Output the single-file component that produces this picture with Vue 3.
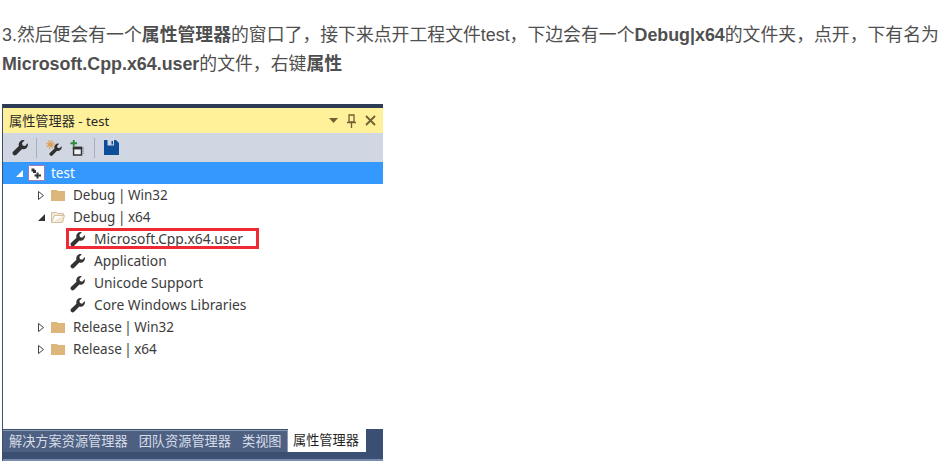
<script setup>
const rows = [
  { label: "Debug | Win32", kind: "folder", level: 1, arrow: "closed" },
  { label: "Debug | x64", kind: "open", level: 1, arrow: "open" },
  { label: "Microsoft.Cpp.x64.user", kind: "wrench", level: 2, marked: true },
  { label: "Application", kind: "wrench", level: 2 },
  { label: "Unicode Support", kind: "wrench", level: 2 },
  { label: "Core Windows Libraries", kind: "wrench", level: 2 },
  { label: "Release | Win32", kind: "folder", level: 1, arrow: "closed" },
  { label: "Release | x64", kind: "folder", level: 1, arrow: "closed" },
];
const wrench =
  "M15.7 3.3l-2.7 2.7-2.4-.6-.6-2.4 2.700-2.700a4.600 4.600 0 0 0-5.800 5.800L1 11.800a2.300 2.300 0 0 0 3.200 3.200L10 9.100a4.600 4.600 0 0 0 5.700-5.800z";
</script>

<template>
  <main class="page">
    <p class="intro">
      3.然后便会有一个<b>属性管理器</b>的窗口了，接下来点开工程文件test，下边会有一个<b>Debug|x64</b>的文件夹，点开，下有名为<br />
      <b>Microsoft.Cpp.x64.user</b>的文件，右键<b>属性</b>
    </p>

    <section class="win">
      <header class="title">
        <span>属性管理器 - test</span>
        <div class="title-btns">
          <svg width="9" height="5" viewBox="0 0 9 5"><path d="M0 0h9L4.500 5z" fill="#6e6234" /></svg>
          <svg width="9" height="14" viewBox="0 0 9 14">
            <path d="M2 1h5v7H2zM0 8.500h9M4.500 9v5" fill="none" stroke="#6e6234" stroke-width="1.300" />
          </svg>
          <svg width="11" height="11" viewBox="0 0 11 11">
            <path d="M1 1l9 9M10 1l-9 9" stroke="#6e6234" stroke-width="1.800" />
          </svg>
        </div>
      </header>

      <div class="tools">
        <svg width="16" height="16" viewBox="0 0 16 16"><path :d="wrench" fill="#2f2f2f" /></svg>
        <i class="sep"></i>
        <svg class="gear" width="16" height="16" viewBox="0 0 16 16">
          <circle cx="4.500" cy="4.500" r="2.600" fill="#dca05a" />
          <circle cx="4.500" cy="4.500" r="3.700" fill="none" stroke="#dca05a" stroke-width="1.400" stroke-dasharray="1.500 1.400" />
          <path :d="wrench" fill="#2f2f2f" transform="translate(3 3.500) scale(.8)" />
        </svg>
        <svg class="add" width="16" height="16" viewBox="0 0 17 17">
          <path d="M3 0h2v2.500h2.500v2H5V7H3V4.500H.5v-2H3z" fill="#2e8b3a" />
          <path d="M3.800 8h8.400v8H3.800z" fill="#f0f1f5" stroke="#333" stroke-width="1.500" />
          <path d="M3 7.200h10V10H3z" fill="#333" />
          <path d="M14 8v8" stroke="#8d8f96" stroke-dasharray="1 1" stroke-width="2" />
        </svg>
        <i class="sep"></i>
        <svg class="save" width="15" height="15" viewBox="0 0 15 15">
          <path d="M0 0h12l3 3v12H0z" fill="#0e4d97" />
          <path d="M3.500 0h6.500v5.500H3.500z" fill="#d1d6e3" />
          <path d="M7.500 1h1.500v3.500H7.500z" fill="#0e4d97" />
        </svg>
      </div>

      <div class="root">
        <svg class="arrow" width="7" height="7" viewBox="0 0 7 7"><path d="M7 0v7H0z" fill="#fff" /></svg>
        <svg width="17" height="16" viewBox="0 0 17 16">
          <path d="M.5.500h16v15H.5z" fill="#fff" stroke="#a878b4" />
          <path d="M3.500 3.500h3v1.500h1.500v3H5V6.500H3.500z" fill="#333" />
          <path d="M8.500 7.500h2v2h2.500v2h-2.500v2h-2v-2H6.500v-2h2z" fill="#333" />
        </svg>
        <span>test</span>
      </div>

      <ul class="tree">
        <li v-for="row in rows" :key="row.label" class="row" :class="'lv' + row.level">
          <template v-if="row.arrow">
            <svg v-if="row.arrow === 'closed'" class="arrow" width="6" height="9" viewBox="0 0 6 9">
              <path d="M.5.500l5 4-5 4z" fill="#fff" stroke="#444" />
            </svg>
            <svg v-else class="arrow open" width="7" height="7" viewBox="0 0 7 7"><path d="M7 0v7H0z" fill="#333" /></svg>
          </template>
          <svg v-if="row.kind === 'folder'" width="14" height="12" viewBox="0 0 14 12">
            <path d="M0 1h6l1 1h7v10H0z" fill="#dcb67a" />
          </svg>
          <svg v-else-if="row.kind === 'open'" width="14" height="12" viewBox="0 0 14 12">
            <path d="M.5 11.500v-10h5l1 1h6v2M.5 11.500h11l2-7h-10z" fill="#f3e8d4" stroke="#d2c0a0" />
          </svg>
          <svg v-else width="15" height="15" viewBox="0 0 16 16"><path :d="wrench" fill="#333" /></svg>
          <span class="label" :class="{ marked: row.marked }">{{ row.label }}</span>
        </li>
      </ul>

      <nav class="tabs">
        <div class="strip">
          <span class="tab">解决方案资源管理器</span>
          <span class="tab">团队资源管理器</span>
          <span class="tab">类视图</span>
        </div>
        <span class="active">属性管理器</span>
      </nav>
    </section>
  </main>
</template>

<style>
body {
  background: #fff;
}
</style>

<style scoped>
.page {
  width: 944px;
  height: 470px;
  overflow: hidden;
  font-family: "Noto Sans", "Noto Sans CJK SC", sans-serif;
}
.intro {
  margin: 0;
  padding: 21px 0 0 2px;
  white-space: nowrap;
  font: 17.850px/29px "Liberation Sans", "Noto Sans CJK SC", sans-serif;
  color: #4f4f4f;
}
.win {
  box-sizing: border-box;
  margin: 25px 0 0 2px;
  width: 381px;
  height: 357px;
  display: flex;
  flex-direction: column;
  border-left: 1px solid #3b4f73;
  border-top: 4px solid #2e3b56;
  background: #fff;
}
.title {
  height: 25px;
  flex: none;
  display: flex;
  align-items: center;
  justify-content: space-between;
  padding: 0 7px 0 6px;
  background: #fff09a;
  font-size: 13.200px;
  color: #2b2b2b;
}
.title-btns {
  display: flex;
  align-items: center;
  gap: 9px;
}
.tools {
  height: 29px;
  flex: none;
  display: flex;
  align-items: center;
  padding-left: 9px;
  background: #d1d6e3;
}
.sep {
  width: 1px;
  height: 20px;
  margin-left: 8px;
  background: #a9afbd;
}
.gear {
  margin-left: 9px;
}
.add {
  margin-left: 8px;
}
.save {
  margin-left: 9px;
}
.root {
  height: 22px;
  flex: none;
  display: flex;
  align-items: center;
  padding-left: 13px;
  background: #3399ff;
  color: #fff;
  font-size: 13.500px;
}
.root .arrow {
  margin-right: 5px;
}
.root span {
  margin-left: 6px;
}
.tree {
  list-style: none;
  margin: 0;
  padding: 0;
  flex: 1;
}
.row {
  height: 22px;
  display: flex;
  align-items: center;
  color: #3c3c3c;
}
.row svg {
  flex: none;
}
.lv1 {
  padding-left: 35px;
  font-size: 13.500px;
  word-spacing: -1px;
}
.lv1 .arrow {
  margin-right: 7px;
}
.lv1 .arrow.open {
  margin-right: 6px;
}
.lv1 .label {
  margin-left: 8px;
}
.lv2 {
  padding-left: 67px;
  font-size: 13.800px;
}
.lv2 .label {
  margin: 0 0 2px 9px;
}
.marked {
  position: relative;
}
.marked::after {
  content: "";
  position: absolute;
  left: -28px;
  top: -1px;
  width: 187px;
  height: 15px;
  border: 3px solid #ee2a35;
}
.tabs {
  height: 32px;
  flex: none;
  display: flex;
  align-items: flex-start;
  background: #3b4f73;
  box-sizing: border-box;
  border-bottom: 2px solid #7a8bb0;
  font-size: 13.200px;
}
.strip {
  display: flex;
  width: 285px;
  box-sizing: border-box;
  height: 22px;
  margin-top: 1px;
  padding-left: 3px;
  gap: 5px;
  background: #4d6082;
  border-top: 1px solid #8c9ab6;
  border-right: 1px solid #8c9ab6;
}
.tab {
  padding: 0 3px;
  line-height: 21px;
  color: #d7dde8;
}
.active {
  width: 78px;
  height: 23px;
  box-sizing: border-box;
  padding-left: 5px;
  line-height: 23px;
  background: #fff;
  color: #1f1f1f;
}
</style>
